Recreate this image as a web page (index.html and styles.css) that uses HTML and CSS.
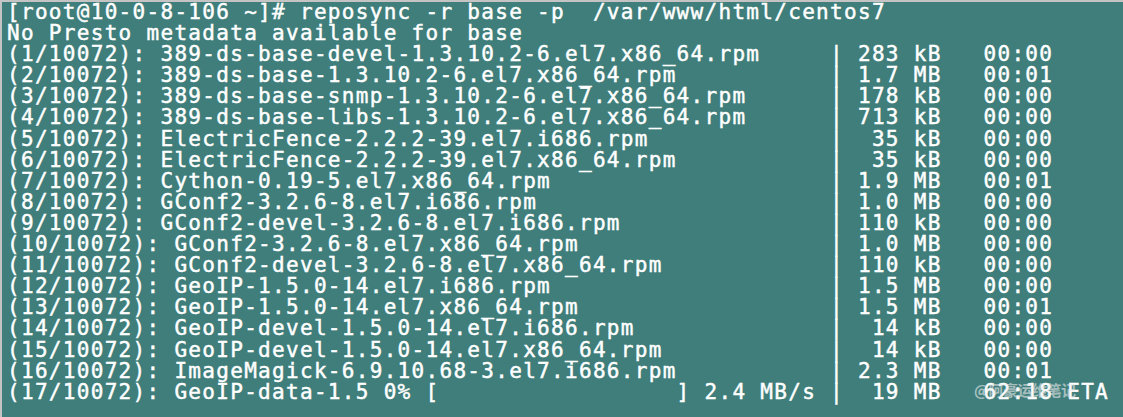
FILE: index.html
```html
<!DOCTYPE html>
<html lang="en">
<head>
<meta charset="utf-8">
<title>reposync</title>
<link rel="stylesheet" href="styles.css">
</head>
<body>
<div class="terminal">
  <div class="line">[root@10-0-8-106 ~]# reposync -r base -p  /var/www/html/centos7</div>
  <div class="line">No Presto metadata available for base</div>
  <div class="row"><span class="file">(1/10072): 389-ds-base-devel-1.3.10.2-6.el7.x86_64.rpm</span><span class="stat">| 283 kB   00:00</span></div>
  <div class="row"><span class="file">(2/10072): 389-ds-base-1.3.10.2-6.el7.x86_64.rpm</span><span class="stat">| 1.7 MB   00:01</span></div>
  <div class="row"><span class="file">(3/10072): 389-ds-base-snmp-1.3.10.2-6.el7.x86_64.rpm</span><span class="stat">| 178 kB   00:00</span></div>
  <div class="row"><span class="file">(4/10072): 389-ds-base-libs-1.3.10.2-6.el7.x86_64.rpm</span><span class="stat">| 713 kB   00:00</span></div>
  <div class="row"><span class="file">(5/10072): ElectricFence-2.2.2-39.el7.i686.rpm</span><span class="stat">|  35 kB   00:00</span></div>
  <div class="row"><span class="file">(6/10072): ElectricFence-2.2.2-39.el7.x86_64.rpm</span><span class="stat">|  35 kB   00:00</span></div>
  <div class="row"><span class="file">(7/10072): Cython-0.19-5.el7.x86_64.rpm</span><span class="stat">| 1.9 MB   00:01</span></div>
  <div class="row"><span class="file">(8/10072): GConf2-3.2.6-8.el7.i686.rpm</span><span class="stat">| 1.0 MB   00:00</span></div>
  <div class="row"><span class="file">(9/10072): GConf2-devel-3.2.6-8.el7.i686.rpm</span><span class="stat">| 110 kB   00:00</span></div>
  <div class="row"><span class="file">(10/10072): GConf2-3.2.6-8.el7.x86_64.rpm</span><span class="stat">| 1.0 MB   00:00</span></div>
  <div class="row"><span class="file">(11/10072): GConf2-devel-3.2.6-8.el7.x86_64.rpm</span><span class="stat">| 110 kB   00:00</span></div>
  <div class="row"><span class="file">(12/10072): GeoIP-1.5.0-14.el7.i686.rpm</span><span class="stat">| 1.5 MB   00:00</span></div>
  <div class="row"><span class="file">(13/10072): GeoIP-1.5.0-14.el7.x86_64.rpm</span><span class="stat">| 1.5 MB   00:01</span></div>
  <div class="row"><span class="file">(14/10072): GeoIP-devel-1.5.0-14.el7.i686.rpm</span><span class="stat">|  14 kB   00:00</span></div>
  <div class="row"><span class="file">(15/10072): GeoIP-devel-1.5.0-14.el7.x86_64.rpm</span><span class="stat">|  14 kB   00:00</span></div>
  <div class="row"><span class="file">(16/10072): ImageMagick-6.9.10.68-3.el7.i686.rpm</span><span class="stat">| 2.3 MB   00:01</span></div>
  <div class="row"><span class="file">(17/10072): GeoIP-data-1.5 0% [                 ] 2.4 MB/s </span><span class="stat">|  19 MB   62:18 ETA</span></div>
  <div class="watermark">@阿豪运维笔记</div>
</div>
</body>
</html>
```

FILE: styles.css
```css
:root {
  --cw: 13.95px;
}

html, body {
  margin: 0;
  padding: 0;
  background: #3f7e7b;
}

.terminal {
  position: relative;
  box-sizing: border-box;
  width: 1123px;
  height: 417px;
  border-top: 2px solid #c4c4c4;
  border-left: 2px solid #c4c4c4;
  padding: 0 0 0 5px;
  background: #3f7e7b;
  color: #ffffff;
  font-family: "DejaVu Sans Mono", "Liberation Mono", monospace;
  font-size: 21px;
  letter-spacing: 1.307px;
  line-height: 21.1px;
  -webkit-text-stroke: 0.45px #ffffff;
  overflow: hidden;
}

.line,
.row {
  display: flex;
  height: 21.1px;
  white-space: pre;
}

.file {
  flex: 0 0 calc(59 * var(--cw));
}

.stat {
  flex: 0 0 auto;
}

.watermark {
  position: absolute;
  left: 972px;
  top: 378px;
  font-family: "Noto Sans CJK SC", "Noto Sans", sans-serif;
  font-size: 15px;
  font-weight: 700;
  letter-spacing: -0.5px;
  line-height: 20px;
  -webkit-text-stroke: 0;
  color: rgba(235, 235, 235, 0.6);
}
```
